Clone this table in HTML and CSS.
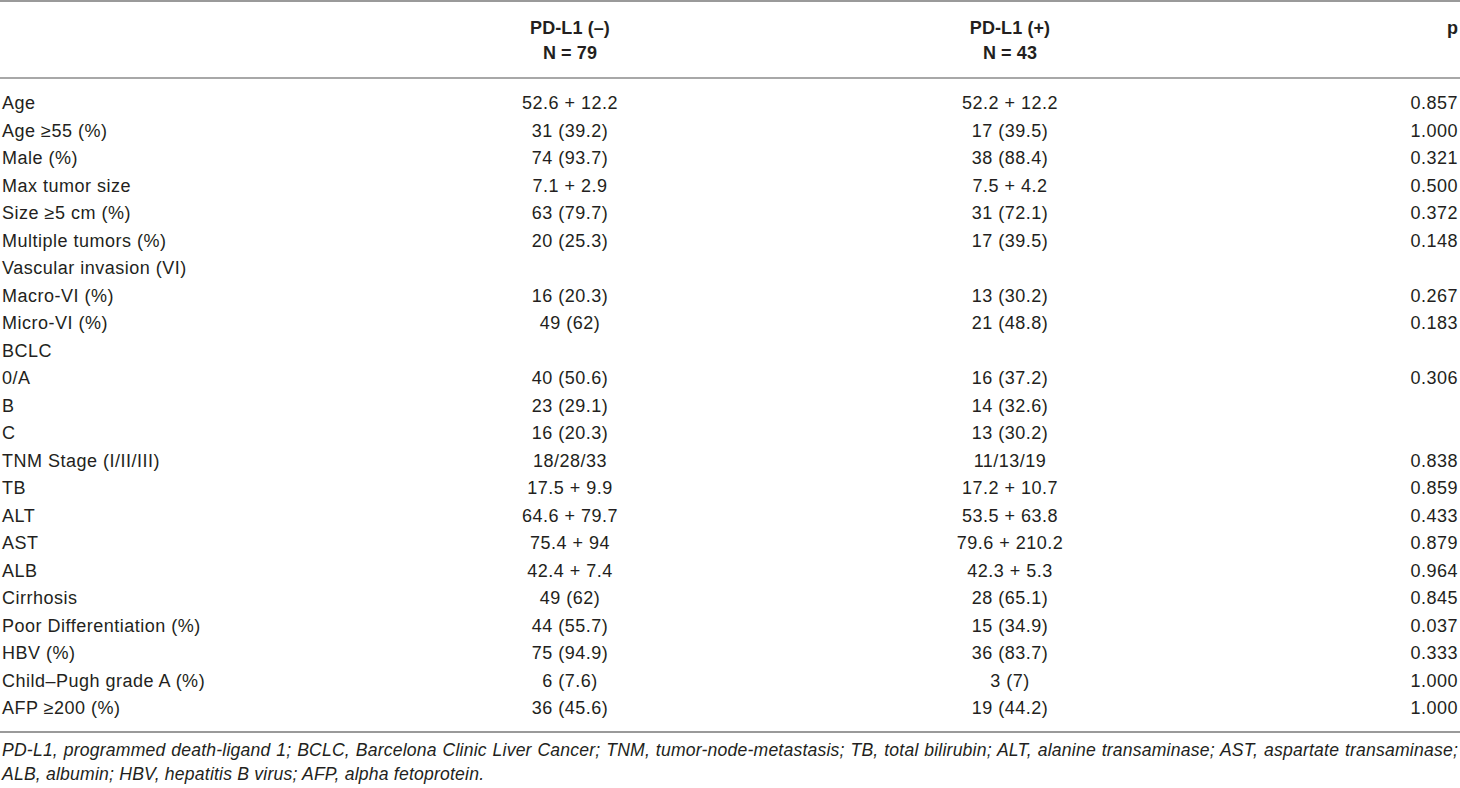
FILE: index.html
```html
<!DOCTYPE html>
<html lang="en">

<head>
  <meta charset="UTF-8">
  <meta name="viewport" content="width=device-width, initial-scale=1.0">
  <title>PD-L1 expression and clinical characteristics</title>
  <link rel="stylesheet" href="styles.css">
</head>

<body>
  <div class="table-wrap">
    <table class="data-table">
      <colgroup>
        <col class="col-label">
        <col class="col-group">
        <col class="col-group">
        <col class="col-p">
      </colgroup>
      <thead>
        <tr>
          <th></th>
          <th>PD-L1 (–)<br>N = 79</th>
          <th>PD-L1 (+)<br>N = 43</th>
          <th class="num">p</th>
        </tr>
      </thead>
      <tbody>
        <tr class="first"><td>Age</td><td>52.6 + 12.2</td><td>52.2 + 12.2</td><td class="num">0.857</td></tr>
        <tr><td>Age ≥55 (%)</td><td>31 (39.2)</td><td>17 (39.5)</td><td class="num">1.000</td></tr>
        <tr><td>Male (%)</td><td>74 (93.7)</td><td>38 (88.4)</td><td class="num">0.321</td></tr>
        <tr><td>Max tumor size</td><td>7.1 + 2.9</td><td>7.5 + 4.2</td><td class="num">0.500</td></tr>
        <tr><td>Size ≥5 cm (%)</td><td>63 (79.7)</td><td>31 (72.1)</td><td class="num">0.372</td></tr>
        <tr><td>Multiple tumors (%)</td><td>20 (25.3)</td><td>17 (39.5)</td><td class="num">0.148</td></tr>
        <tr><td>Vascular invasion (VI)</td><td></td><td></td><td class="num"></td></tr>
        <tr><td>Macro-VI (%)</td><td>16 (20.3)</td><td>13 (30.2)</td><td class="num">0.267</td></tr>
        <tr><td>Micro-VI (%)</td><td>49 (62)</td><td>21 (48.8)</td><td class="num">0.183</td></tr>
        <tr><td>BCLC</td><td></td><td></td><td class="num"></td></tr>
        <tr><td>0/A</td><td>40 (50.6)</td><td>16 (37.2)</td><td class="num">0.306</td></tr>
        <tr><td>B</td><td>23 (29.1)</td><td>14 (32.6)</td><td class="num"></td></tr>
        <tr><td>C</td><td>16 (20.3)</td><td>13 (30.2)</td><td class="num"></td></tr>
        <tr><td>TNM Stage (I/II/III)</td><td>18/28/33</td><td>11/13/19</td><td class="num">0.838</td></tr>
        <tr><td>TB</td><td>17.5 + 9.9</td><td>17.2 + 10.7</td><td class="num">0.859</td></tr>
        <tr><td>ALT</td><td>64.6 + 79.7</td><td>53.5 + 63.8</td><td class="num">0.433</td></tr>
        <tr><td>AST</td><td>75.4 + 94</td><td>79.6 + 210.2</td><td class="num">0.879</td></tr>
        <tr><td>ALB</td><td>42.4 + 7.4</td><td>42.3 + 5.3</td><td class="num">0.964</td></tr>
        <tr><td>Cirrhosis</td><td>49 (62)</td><td>28 (65.1)</td><td class="num">0.845</td></tr>
        <tr><td>Poor Differentiation (%)</td><td>44 (55.7)</td><td>15 (34.9)</td><td class="num">0.037</td></tr>
        <tr><td>HBV (%)</td><td>75 (94.9)</td><td>36 (83.7)</td><td class="num">0.333</td></tr>
        <tr><td>Child–Pugh grade A (%)</td><td>6 (7.6)</td><td>3 (7)</td><td class="num">1.000</td></tr>
        <tr class="last"><td>AFP ≥200 (%)</td><td>36 (45.6)</td><td>19 (44.2)</td><td class="num">1.000</td></tr>
      </tbody>
    </table>
    <p class="footnote">PD-L1, programmed death-ligand 1; BCLC, Barcelona Clinic Liver Cancer; TNM, tumor-node-metastasis; TB, total bilirubin; ALT, alanine transaminase; AST, aspartate transaminase; ALB, albumin; HBV, hepatitis B virus; AFP, alpha fetoprotein.</p>
  </div>
</body>

</html>
```

FILE: styles.css
```css
body {
  margin: 0;
  font-family: "Liberation Sans", Arial, sans-serif;
  color: #231f20;
  background: #fff;
}

.table-wrap {
  width: 1460px;
}

.data-table {
  width: 100%;
  border-collapse: collapse;
  table-layout: fixed;
  font-size: 18px;
  letter-spacing: 0.5px;
}

.col-label {
  width: 350px;
}

.col-group {
  width: 440px;
}

.data-table thead tr {
  border-top: 2px solid #9a9a9a;
  border-bottom: 2px solid #a8a8a8;
}

.data-table th {
  font-weight: bold;
  text-align: center;
  vertical-align: top;
  line-height: 25px;
  padding: 14px 0 11px;
  letter-spacing: 0.1px;
}

.data-table td {
  padding: 0;
  line-height: 27.5px;
  text-align: center;
  white-space: nowrap;
}

.data-table td:first-child {
  text-align: left;
  padding-left: 2px;
}

.data-table .num {
  text-align: right;
  padding-right: 2px;
}

.data-table tr.first td {
  padding-top: 11px;
}

.data-table tr.last td {
  padding-bottom: 8px;
}

.data-table tbody {
  border-bottom: 2px solid #9a9a9a;
}

.footnote {
  margin: 0;
  padding: 5px 2px 0;
  font-size: 17.6px;
  line-height: 24px;
  font-style: italic;
  letter-spacing: 0.2px;
  text-align: justify;
}
```
